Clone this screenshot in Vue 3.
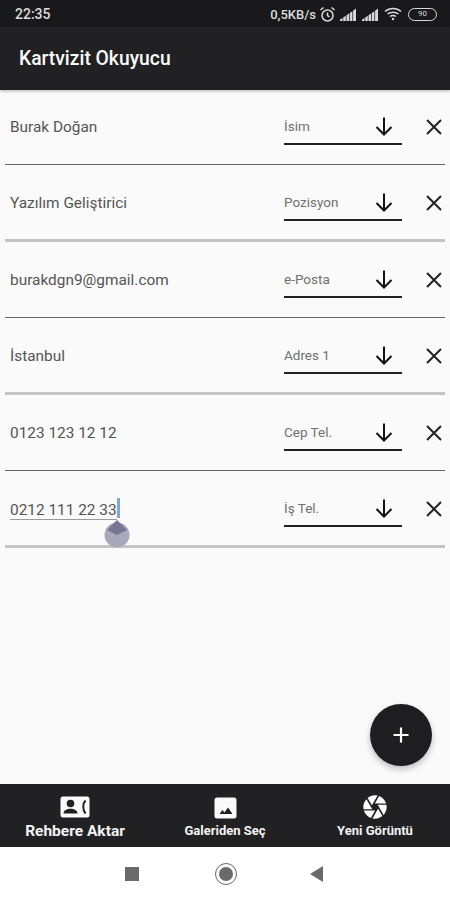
<script setup>
const rows = [
  { value: 'Burak Doğan', label: 'İsim' },
  { value: 'Yazılım Geliştirici', label: 'Pozisyon' },
  { value: 'burakdgn9@gmail.com', label: 'e-Posta' },
  { value: 'İstanbul', label: 'Adres 1' },
  { value: '0123 123 12 12', label: 'Cep Tel.' },
  { value: '0212 111 22 33', label: 'İş Tel.', active: true }
]
</script>

<template>
  <div class="screen">
    <div class="status-bar">
      <span class="time">22:35</span>
      <div class="status-icons">
        <span class="speed">0,5KB/s</span>
        <svg class="alarm" width="17" height="17" viewBox="0 0 17 17" fill="none" stroke="#d8d8d8" stroke-width="1.500">
          <circle cx="8.500" cy="9.500" r="5.500" />
          <path d="M8.500 6.500v3.200l2 1.200M1.500 4l3-2.500M15.500 4l-3-2.500" />
        </svg>
        <svg class="signal" width="16" height="13" viewBox="0 0 16 13" fill="#d8d8d8">
          <path d="M0 13v-1.500L2.500 10v3zM3.200 13V9.500l2.600-1.700V13zM6.500 13V7.300l2.600-1.800V13zM9.800 13V5l2.600-1.800V13zM13.100 13V2.700L16 .5V13z" />
        </svg>
        <svg class="signal" width="16" height="13" viewBox="0 0 16 13" fill="#d8d8d8">
          <path d="M0 13v-1.500L2.500 10v3zM3.200 13V9.500l2.600-1.700V13zM6.500 13V7.300l2.600-1.800V13zM9.800 13V5l2.600-1.800V13zM13.100 13V2.700L16 .5V13z" />
        </svg>
        <svg class="wifi" width="18" height="14" viewBox="0 0 18 14" fill="none" stroke="#d8d8d8" stroke-width="1.500">
          <path d="M1 4.500C5.500.5 12.500.5 17 4.500M3.500 7C6.500 4.500 11.500 4.500 14.500 7M6 9.500c1.800-1.300 4.200-1.300 6 0" />
          <circle cx="9" cy="12" r="1.200" fill="#d8d8d8" stroke="none" />
        </svg>
        <div class="battery">90</div>
      </div>
    </div>

    <header class="app-bar">
      <h1>Kartvizit Okuyucu</h1>
    </header>

    <main class="list">
      <div v-for="row in rows" :key="row.label" class="row">
        <div class="value" :class="{ active: row.active }">
          <span class="value-text">{{ row.value }}</span>
          <span v-if="row.active" class="caret"></span>
        </div>
        <div class="select">
          <span class="select-label">{{ row.label }}</span>
          <svg class="arrow" width="24" height="24" viewBox="0 0 24 24" fill="none" stroke="#111" stroke-width="2">
            <path d="M12 3.500v17M4.500 13l7.500 7.500 7.500-7.500" />
          </svg>
        </div>
        <svg class="close" width="24" height="24" viewBox="0 0 24 24" fill="none" stroke="#222" stroke-width="2">
          <path d="M5 5l14 14M19 5L5 19" />
        </svg>
      </div>

      <div class="handle">
        <svg width="26" height="28" viewBox="0 0 26 28">
          <circle cx="13" cy="15" r="12.500" fill="#a9a8bb" />
          <path d="M13 0l10 10-10 5L3 10z" fill="#777592" />
        </svg>
      </div>

      <button class="fab">
        <svg width="20" height="20" viewBox="0 0 20 20" stroke="#fff" stroke-width="2.200">
          <path d="M10 2.500v15M2.500 10h15" />
        </svg>
      </button>
    </main>

    <nav class="bottom-bar">
      <div class="tab tab-big">
        <svg width="30" height="22" viewBox="0 0 30 22">
          <rect x="0.500" y="0.500" width="29" height="21" rx="2.500" fill="#fafafa" />
          <circle cx="10.500" cy="7.500" r="3.800" fill="#212123" />
          <path d="M3.500 17.500c0-3.300 3.500-4.800 7-4.800s7 1.500 7 4.800z" fill="#212123" />
          <path d="M25.500 4.500c-3 3-3 9.500 0 13" fill="none" stroke="#212123" stroke-width="2" />
        </svg>
        <span>Rehbere Aktar</span>
      </div>
      <div class="tab">
        <svg width="23" height="22" viewBox="0 0 23 22">
          <rect x="0.500" y="0.500" width="22" height="21" rx="2.500" fill="#fafafa" />
          <path d="M5.500 17l3-4 2 2.500 3.500-5 4.500 6.500z" fill="#212123" />
        </svg>
        <span>Galeriden Seç</span>
      </div>
      <div class="tab">
        <svg width="28" height="28" viewBox="0 0 24 24" class="camera">
          <circle cx="12" cy="12" r="10.500" fill="#212123" />
          <path fill="#fafafa" d="M9.400 10.500l4.770-8.260C13.470 2.090 12.750 2 12 2c-2.400 0-4.600.850-6.320 2.250l3.660 6.350.060-.100zM21.540 9c-.920-2.920-3.150-5.260-6-6.340L11.880 9h9.660zm.260 1h-7.490l.290.500 4.760 8.250C21 16.970 22 14.610 22 12c0-.690-.070-1.350-.200-2zM8.540 12l-3.900-6.750C3.010 7.030 2 9.390 2 12c0 .690.070 1.350.200 2h7.490l-1.150-2zm-6.080 3c.920 2.920 3.150 5.260 6 6.340L12.120 15H2.460zm11.270 0l-3.900 6.760c.700.150 1.420.240 2.170.240 2.400 0 4.600-.850 6.320-2.250l-3.660-6.350-.930 1.600z" />
        </svg>
        <span>Yeni Görüntü</span>
      </div>
    </nav>

    <div class="nav-bar">
      <span class="nav-square"></span>
      <span class="nav-circle"><i></i></span>
      <span class="nav-back"></span>
    </div>
  </div>
</template>

<style>
body {
  margin: 0;
}
</style>

<style scoped>
.screen {
  width: 450px;
  height: 900px;
  display: flex;
  flex-direction: column;
  overflow: hidden;
  background: #fafafa;
  font-family: Roboto, "Liberation Sans", sans-serif;
}

.status-bar {
  height: 27px;
  flex-shrink: 0;
  display: flex;
  align-items: center;
  justify-content: space-between;
  padding: 1px 13px 0 15px;
  box-sizing: border-box;
  background: #19191b;
  color: #dcdcdc;
}

.time {
  font-size: 14px;
  font-weight: 500;
}

.status-icons {
  display: flex;
  align-items: center;
}

.speed {
  font-size: 13px;
  font-weight: 500;
  margin-right: 3px;
}

.alarm {
  margin-right: 4px;
}

.signal {
  margin-right: 6px;
}

.wifi {
  margin-right: 6px;
}

.battery {
  width: 29px;
  height: 13px;
  box-sizing: border-box;
  border: 1.500px solid #d8d8d8;
  border-radius: 7px;
  font-size: 8px;
  line-height: 10px;
  text-align: center;
  color: #d8d8d8;
}

.app-bar {
  height: 63px;
  flex-shrink: 0;
  display: flex;
  align-items: center;
  padding: 0 19px;
  box-sizing: border-box;
  background: #212123;
  box-shadow: 0 1px 3px rgba(0, 0, 0, 0.3);
  position: relative;
  z-index: 1;
}

.app-bar h1 {
  margin: 0;
  font-size: 19.300px;
  font-weight: 500;
  color: #fafafa;
}

.list {
  flex: 1;
  position: relative;
  padding: 0 5px;
}

.row {
  height: 76.500px;
  display: flex;
  align-items: center;
  box-sizing: border-box;
  padding: 2px 0 0 5px;
  border-bottom: 1.500px solid #666;
}

.row:first-child {
  height: 75px;
  padding-top: 0;
}

.row:nth-child(even) {
  border-bottom: 3px solid #c4c4c4;
}

.value {
  flex: 1;
  position: relative;
  font-size: 15.400px;
  color: #555;
}

.value.active .value-text {
  border-bottom: 1px solid #9a9a9a;
}

.caret {
  display: inline-block;
  width: 3px;
  height: 20px;
  background: #7fa8dc;
  vertical-align: -3px;
}

.select {
  width: 118px;
  height: 36px;
  display: flex;
  align-items: center;
  justify-content: space-between;
  box-sizing: border-box;
  padding: 0 5px 0 0;
  border-bottom: 2px solid #222;
  margin-right: 20px;
}

.select-label {
  font-size: 13.500px;
  color: #707070;
}

.arrow {
  margin-right: 1px;
}

.close {
  width: 24px;
  margin-right: -1px;
}

.handle {
  position: absolute;
  left: 104px;
  top: 430px;
  line-height: 0;
}

.fab {
  position: absolute;
  left: 370px;
  top: 614px;
  width: 62px;
  height: 62px;
  padding: 0;
  border: none;
  border-radius: 50%;
  display: flex;
  align-items: center;
  justify-content: center;
  background: #1e1e20;
  box-shadow: 0 3px 6px rgba(0, 0, 0, 0.25);
}

.bottom-bar {
  height: 63px;
  flex-shrink: 0;
  display: grid;
  grid-template-columns: 150px 150px 150px;
  background: #212123;
}

.tab {
  display: flex;
  flex-direction: column;
  align-items: center;
  justify-content: flex-end;
  gap: 4px;
  padding-bottom: 9px;
  box-sizing: border-box;
  font-size: 13px;
  font-weight: 700;
  color: #f2f2f2;
}

.camera {
  margin-bottom: -2px;
}

.tab-big {
  font-size: 15.500px;
  gap: 4px;
  padding-bottom: 7px;
}

.nav-bar {
  height: 53px;
  flex-shrink: 0;
  display: flex;
  align-items: center;
  justify-content: center;
  gap: 73px;
  padding-right: 2px;
  box-sizing: border-box;
  background: #fff;
}

.nav-square {
  width: 14px;
  height: 14px;
  margin-right: 3px;
  background: #6a6a6a;
}

.nav-circle {
  width: 20px;
  height: 20px;
  border: 1.500px solid #666;
  border-radius: 50%;
  display: flex;
  align-items: center;
  justify-content: center;
}

.nav-circle i {
  width: 14px;
  height: 14px;
  border-radius: 50%;
  background: #6a6a6a;
}

.nav-back {
  width: 0;
  height: 0;
  border-top: 8px solid transparent;
  border-bottom: 8px solid transparent;
  border-right: 13px solid #6a6a6a;
}
</style>
